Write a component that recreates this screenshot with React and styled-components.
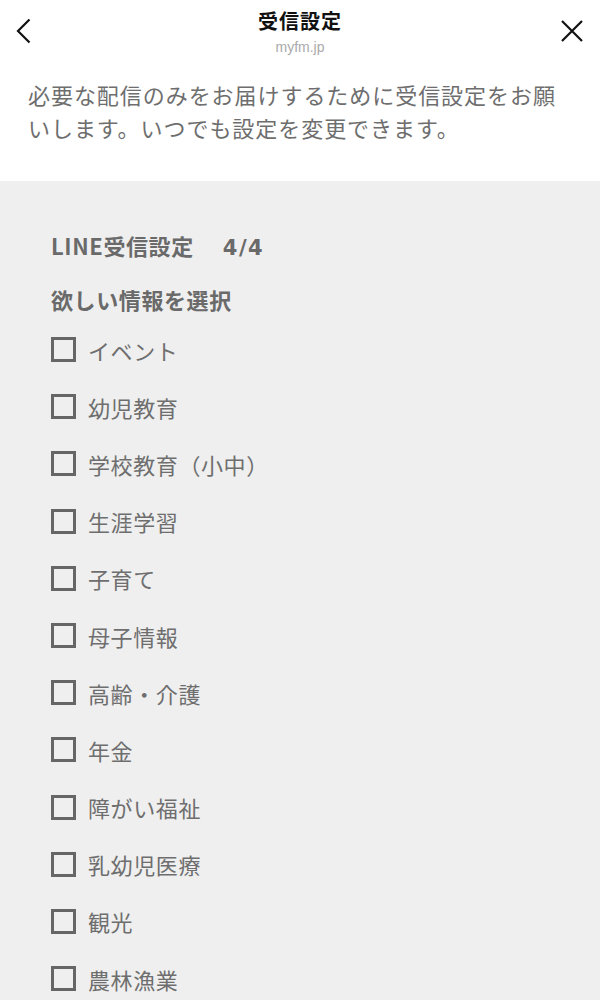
import React from 'react';
import styled, {createGlobalStyle} from "styled-components";

const GlobalStyle = createGlobalStyle`
  html, body {
    margin: 0;
    padding: 0;
    background: #efefef;
  }
  body {
    font-family: "Noto Sans CJK JP", "Noto Sans", sans-serif;
  }
`

const Page = styled.div`
  width: 600px;
  min-height: 1000px;
  background: #efefef;
`

const Top = styled.div`
  background: #fff;
  padding-bottom: 37px;
`

const NavBar = styled.div`
  display: grid;
  grid-template-columns: 80px 1fr 80px;
  align-items: start;
  height: 55px;
`

const NavButton = styled.div`
  display: flex;
  justify-content: ${props => props.right ? "flex-end" : "flex-start"};
  padding: ${props => props.right ? "20px 17px 0 0" : "18px 0 0 16px"};
`

const TitleBlock = styled.div`
  display: flex;
  flex-direction: column;
  align-items: center;
  padding-top: 7px;
`

const Title = styled.div`
  font-size: 20px;
  line-height: 28px;
  font-weight: bold;
  color: #111;
  letter-spacing: 1px;
`

const Domain = styled.div`
  font-family: "Liberation Sans", "Noto Sans", sans-serif;
  font-size: 14px;
  line-height: 18px;
  color: #aaa;
  margin-top: 3px;
`

const Lead = styled.p`
  margin: 23px 0 0;
  padding: 0 28px;
  font-size: 22px;
  line-height: 33px;
  letter-spacing: 0.95px;
  color: #6e6e6e;
`

const Body = styled.div`
  padding: 48px 0 0 51px;
`

const Heading = styled.div`
  height: 32px;
  font-size: 22px;
  line-height: 32px;
  font-weight: bold;
  color: #6a6a6a;
  letter-spacing: 0.6px;
  margin-bottom: ${props => props.gap || 0}px;
`

const Count = styled.span`
  font-family: "DejaVu Sans", "Noto Sans", sans-serif;
  font-size: 21px;
  margin-left: 29px;
  letter-spacing: 1.5px;
`

const List = styled.div`
  display: flex;
  flex-direction: column;
  margin-top: 6px;
`

const Row = styled.label`
  display: flex;
  align-items: center;
  height: 57.2px;
`

const Box = styled.span`
  box-sizing: border-box;
  width: 25px;
  height: 25px;
  border: 3px solid #666;
  margin-right: 12px;
  flex-shrink: 0;
`

const Label = styled.span`
  font-size: 22px;
  letter-spacing: 0.6px;
  color: #6e6e6e;
`

const items = [
    "イベント",
    "幼児教育",
    "学校教育（小中）",
    "生涯学習",
    "子育て",
    "母子情報",
    "高齢・介護",
    "年金",
    "障がい福祉",
    "乳幼児医療",
    "観光",
    "農林漁業",
]

const BackIcon = () => (
    <svg width="15" height="26" viewBox="0 0 15 26">
        <path d="M13.5 1.5 L2 13 L13.5 24.5" fill="none" stroke="#111" strokeWidth="2.2"/>
    </svg>
)

const CloseIcon = () => (
    <svg width="22" height="22" viewBox="0 0 22 22">
        <path d="M1 1 L21 21 M21 1 L1 21" fill="none" stroke="#111" strokeWidth="2.2"/>
    </svg>
)

const App = () => {
    return (
        <Page>
            <GlobalStyle/>
            <Top>
                <NavBar>
                    <NavButton><BackIcon/></NavButton>
                    <TitleBlock>
                        <Title>受信設定</Title>
                        <Domain>myfm.jp</Domain>
                    </TitleBlock>
                    <NavButton right><CloseIcon/></NavButton>
                </NavBar>
                <Lead>必要な配信のみをお届けするために受信設定をお願いします。いつでも設定を変更できます。</Lead>
            </Top>
            <Body>
                <Heading gap={22}>LINE受信設定<Count>4/4</Count></Heading>
                <Heading>欲しい情報を選択</Heading>
                <List>
                    {items.map(item => (
                        <Row key={item}>
                            <Box/>
                            <Label>{item}</Label>
                        </Row>
                    ))}
                </List>
            </Body>
        </Page>
    );
};

export default App;
